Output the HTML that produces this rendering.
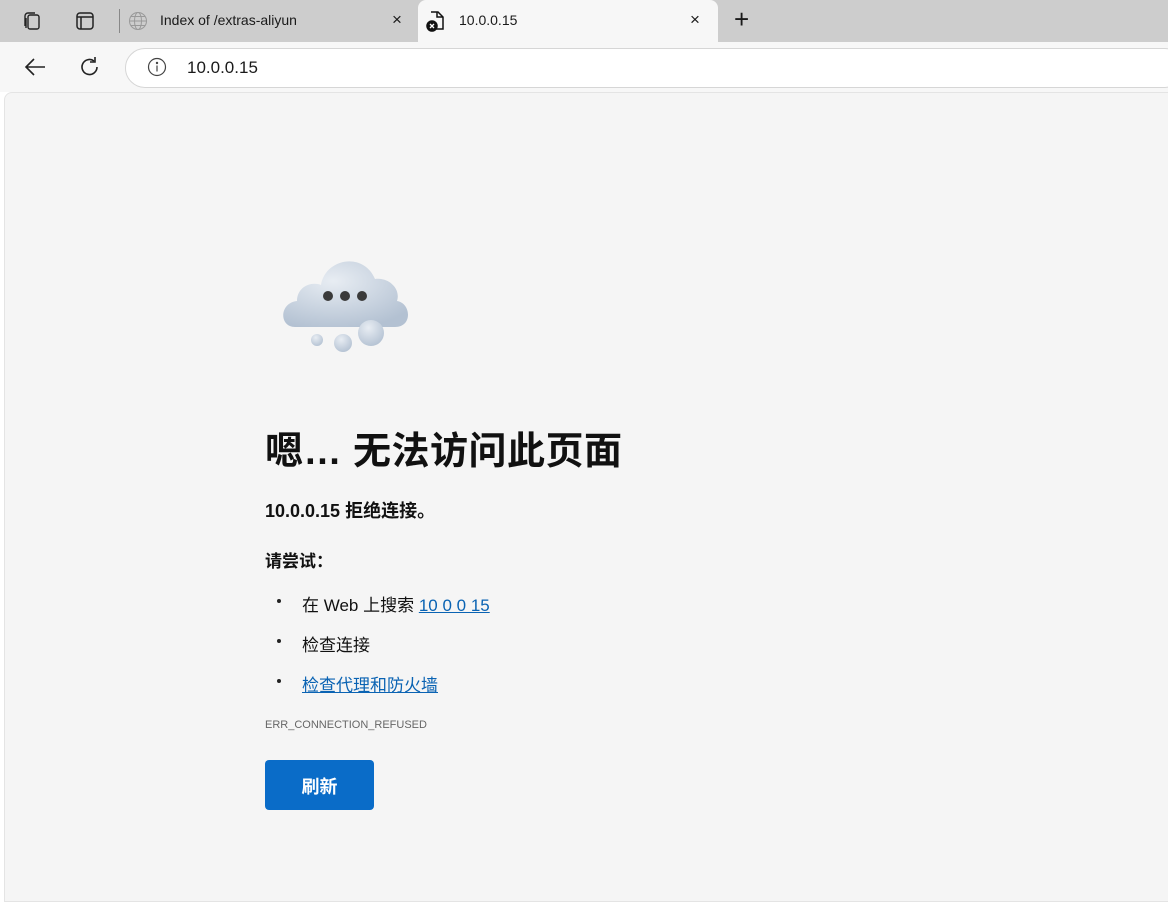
<!DOCTYPE html>
<html><head><meta charset="utf-8"><style>
*{margin:0;padding:0;box-sizing:border-box}
body{width:1168px;height:898px;overflow:hidden;background:#fff;font-family:"Liberation Sans","Noto Sans CJK SC",sans-serif;position:relative}
.tabbar{position:absolute;left:0;top:0;width:1168px;height:42px;background:#cdcdcd}
.tab2{position:absolute;left:418px;top:0;width:300px;height:44px;background:#f7f7f7;border-radius:8px 8px 0 0}
.t{position:absolute;font-size:14px;color:#1a1a1a}
.toolbar{position:absolute;left:0;top:42px;width:1168px;height:50px;background:#f7f7f7}
.addr{position:absolute;left:125px;top:48px;width:1060px;height:40px;background:#fff;border:1px solid #d6d6d6;border-radius:20px}
.page{position:absolute;left:4px;top:92px;width:1170px;height:810px;background:#f5f5f5;border:1px solid #e4e4e4;border-radius:8px 0 0 0}
.c{position:absolute;left:265px;color:#111}
a{color:#0a63b3;text-decoration:underline}
.b{position:absolute;left:12px;top:8px;width:4px;height:4px;border-radius:50%;background:#222}
</style></head><body>
<div class="tabbar"></div>
<div class="tab2"></div>
<svg style="position:absolute;left:21px;top:10px" width="22" height="22" viewBox="0 0 22 22" fill="none" stroke="#222" stroke-width="1.4"><rect x="7" y="5" width="11" height="14" rx="2"/><path d="M4 16V6a3 3 0 0 1 3-3h7"/><path d="M5 18V8"/></svg>
<svg style="position:absolute;left:75px;top:11px" width="20" height="20" viewBox="0 0 20 20" fill="none" stroke="#222" stroke-width="1.5"><rect x="2" y="2" width="16" height="16" rx="3"/><path d="M2 6h16M6 6v12" /></svg>
<div style="position:absolute;left:119px;top:9px;width:1px;height:24px;background:#888"></div>
<svg style="position:absolute;left:128px;top:11px" width="20" height="20" viewBox="0 0 20 20" fill="none" stroke="#999" stroke-width="1"><circle cx="10" cy="10" r="8.5"/><ellipse cx="10" cy="10" rx="3.5" ry="8.5"/><path d="M1.5 10h17M3 5.5h14M3 14.5h14"/></svg>
<div class="t" style="left:160px;top:12px">Index of /extras-aliyun</div>
<div class="t" style="left:392px;top:10px;font-size:17px">×</div>
<svg style="position:absolute;left:424px;top:9px" width="22" height="24" viewBox="0 0 22 24" fill="none" stroke="#111" stroke-width="1.5"><path d="M7 3h7l5 5v12h-9"/><path d="M13 3v5h6"/><circle cx="8" cy="17" r="5" fill="#111"/><path d="M6 15l4 4M10 15l-4 4" stroke="#fff" stroke-width="1.3"/></svg>
<div class="t" style="left:459px;top:12px">10.0.0.15</div>
<div class="t" style="left:690px;top:10px;font-size:17px">×</div>
<div class="t" style="left:734px;top:4px;font-size:26px;font-weight:300">+</div>
<div class="toolbar"></div>
<svg style="position:absolute;left:24px;top:57px" width="22" height="20" viewBox="0 0 22 20" fill="none" stroke="#222" stroke-width="1.6"><path d="M21 10H2M10 2l-8 8 8 8"/></svg>
<svg style="position:absolute;left:79px;top:56px" width="22" height="22" viewBox="0 0 22 22" fill="none" stroke="#222" stroke-width="1.6"><path d="M18 11a7.5 7.5 0 1 1-3-6"/><path d="M16 1v5h-5"/></svg>
<div class="addr"></div>
<svg style="position:absolute;left:147px;top:57px" width="20" height="20" viewBox="0 0 20 20" fill="none" stroke="#444" stroke-width="1.2"><circle cx="10" cy="10" r="8.5"/><path d="M10 8.5v6"/><circle cx="10" cy="6" r=".6" fill="#444"/></svg>
<div class="t" style="left:187px;top:58px;font-size:17px">10.0.0.15</div>
<div class="page"></div>
<svg style="position:absolute;left:279px;top:253px" width="132" height="102" viewBox="0 0 132 102">
<defs><radialGradient id="g" cx="40%" cy="30%" r="75%"><stop offset="0" stop-color="#e8edf3"/><stop offset="1" stop-color="#b3c1d2"/></radialGradient></defs>
<path d="M16 74 C0 74 0 50 18 48 C18 34 32 28 42 32 C46 6 84 -2 96 26 C110 24 122 36 118 48 C132 50 134 74 116 74 Z" fill="url(#g)"/>
<circle cx="92" cy="80" r="13" fill="url(#g)"/>
<circle cx="64" cy="90" r="9" fill="url(#g)"/>
<circle cx="38" cy="87" r="6" fill="url(#g)"/>
<circle cx="49" cy="43" r="5" fill="#3a3a3a"/><circle cx="66" cy="43" r="5" fill="#3a3a3a"/><circle cx="83" cy="43" r="5" fill="#3a3a3a"/>
</svg>
<div class="c" style="top:420px;font-size:38px;font-weight:bold;letter-spacing:0.5px">嗯… 无法访问此页面</div>
<div class="c" style="top:497px;font-size:18px;font-weight:bold">10.0.0.15 拒绝连接。</div>
<div class="c" style="top:547px;font-size:17px;font-weight:bold">请尝试：</div>
<div class="c" style="top:591px;font-size:17px"><span class="b"></span><span style="position:absolute;left:37px;white-space:nowrap">在 Web 上搜索 <a>10 0 0 15</a></span></div>
<div class="c" style="top:631px;font-size:17px"><span class="b"></span><span style="position:absolute;left:37px;white-space:nowrap">检查连接</span></div>
<div class="c" style="top:671px;font-size:17px"><span class="b"></span><span style="position:absolute;left:37px;white-space:nowrap"><a>检查代理和防火墙</a></span></div>
<div class="c" style="top:719px;font-size:11px;color:#666">ERR_CONNECTION_REFUSED</div>
<div style="position:absolute;left:265px;top:760px;width:109px;height:50px;background:#0a6cc8;border-radius:4px;color:#fff;font-weight:bold;font-size:18px;text-align:center;line-height:54px">刷新</div>
</body></html>
